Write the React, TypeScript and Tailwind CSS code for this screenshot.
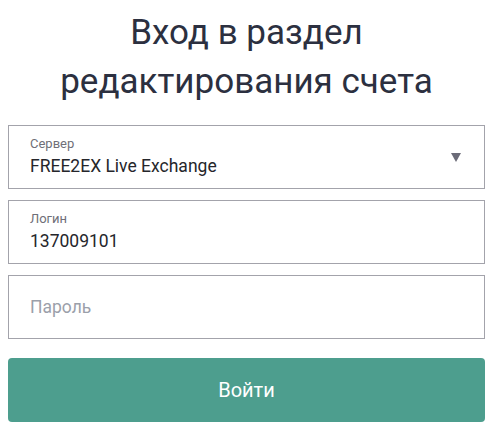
import React from "react";

export default function App() {
  return (
    <main className="w-[493px] h-[434px] bg-white px-2 font-['Roboto',sans-serif]">
      <h1 className="pt-[8px] text-center text-[35px] leading-[49px] font-normal text-[#2c3040]">
        Вход в раздел
        <br />
        редактирования счета
      </h1>

      <div className="mt-[19px] flex flex-col gap-[11px]">
        <div className="h-[64px] border border-[#a3a3ab] pl-[21px] pr-[23px] flex justify-between">
          <div className="flex flex-col pt-[10px]">
            <span className="text-[13px] leading-[16px] text-[#6f6f78]">Сервер</span>
            <span className="mt-[4px] text-[17.5px] leading-[20px] text-[#25262b]">
              FREE2EX Live Exchange
            </span>
          </div>
          <svg className="self-center" width="10" height="9" viewBox="0 0 10 9">
            <path d="M0 0H10L5 9Z" fill="#6b6b78" />
          </svg>
        </div>

        <div className="h-[64px] border border-[#a3a3ab] pl-[21px] pt-[10px] flex flex-col">
          <span className="text-[13px] leading-[16px] text-[#6f6f78]">Логин</span>
          <span className="mt-[4px] text-[17.5px] leading-[20px] text-[#25262b]">137009101</span>
        </div>

        <div className="h-[64px] border border-[#a3a3ab] pl-[21px] flex items-center">
          <span className="text-[17.5px] text-[#9ba0aa]">Пароль</span>
        </div>

        <button className="mt-[8px] h-[64px] w-full rounded-[4px] bg-[#4d9e8e] text-white text-[20px] font-normal">
          Войти
        </button>
      </div>
    </main>
  );
}
